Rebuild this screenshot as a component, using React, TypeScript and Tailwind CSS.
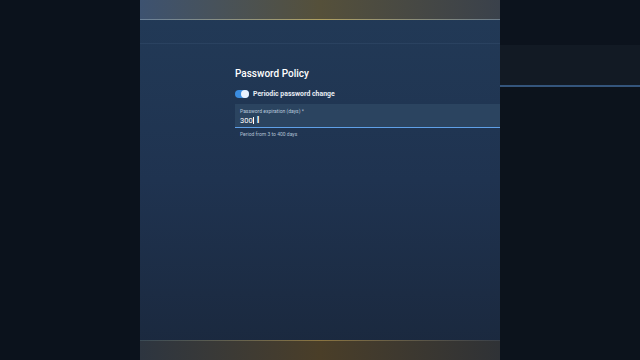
export default function App() {
  return (
    <div className="w-[640px] h-[360px] flex bg-[#0b121b] overflow-hidden" style={{ fontFamily: 'Roboto, "Liberation Sans", sans-serif' }}>
      <div className="w-[140px] h-full bg-[#0b121c]" />
      <div className="w-[360px] h-full flex flex-col bg-gradient-to-b from-[#223a57] via-[#1f3350] to-[#1a283d] relative">
        <div className="h-[19px] bg-gradient-to-r from-[#3d5270] via-[#55503a] to-[#3a414b]" />
        <div className="h-[1px] bg-gradient-to-r from-[#6a8098] via-[#b0a060] to-[#6a7a88]" />
        <div className="h-[24px] border-b border-[#2a4260]" />
        <div className="flex-1 flex flex-col pl-[95px]">
          <div className="mt-[23px] text-[10px] font-medium text-white leading-[13px]">Password Policy</div>
          <div className="mt-[9px] flex items-center gap-[4px]">
            <div className="w-[14px] h-[8px] rounded-full bg-[#3b8de0] relative">
              <div className="absolute right-[0px] top-[0px] w-[8px] h-[8px] rounded-full bg-[#e8f2ff]" />
            </div>
            <div className="text-[6.9px] font-bold text-[#e8edf3] leading-[10px]">Periodic password change</div>
          </div>
          <div className="mt-[5px] h-[24px] bg-[#2b4460] border-b border-[#5fa0e8] pl-[5px] flex flex-col">
            <div className="mt-[4px] text-[5px] text-[#b8c8dc] leading-[6px]">Password expiration (days) *</div>
            <div className="mt-[2px] flex items-center text-[7.5px] text-white leading-[9px]">
              <span>300</span>
              <span className="w-[0.5px] h-[7px] bg-white ml-[0.5px]" />
              <span className="ml-[3px] text-[9px] font-bold leading-[9px]">I</span>
            </div>
          </div>
          <div className="mt-[3px] pl-[5px] text-[5px] text-[#b0c0d2] leading-[6px]">Period from 3 to 400 days</div>
        </div>
        <div className="h-[1px] bg-gradient-to-r from-[#3a4a55] via-[#8a7440] to-[#3a4048]" />
        <div className="h-[19px] bg-gradient-to-r from-[#2d3540] via-[#4a3e28] to-[#2f3236]" />
      </div>
      <div className="w-[140px] h-full flex flex-col">
        <div className="h-[45px] bg-[#0c131d]" />
        <div className="h-[40px] bg-[#121a24]" />
        <div className="h-[2px] bg-[#34557c]" />
        <div className="flex-1 bg-[#0c131c]" />
      </div>
    </div>
  );
}
